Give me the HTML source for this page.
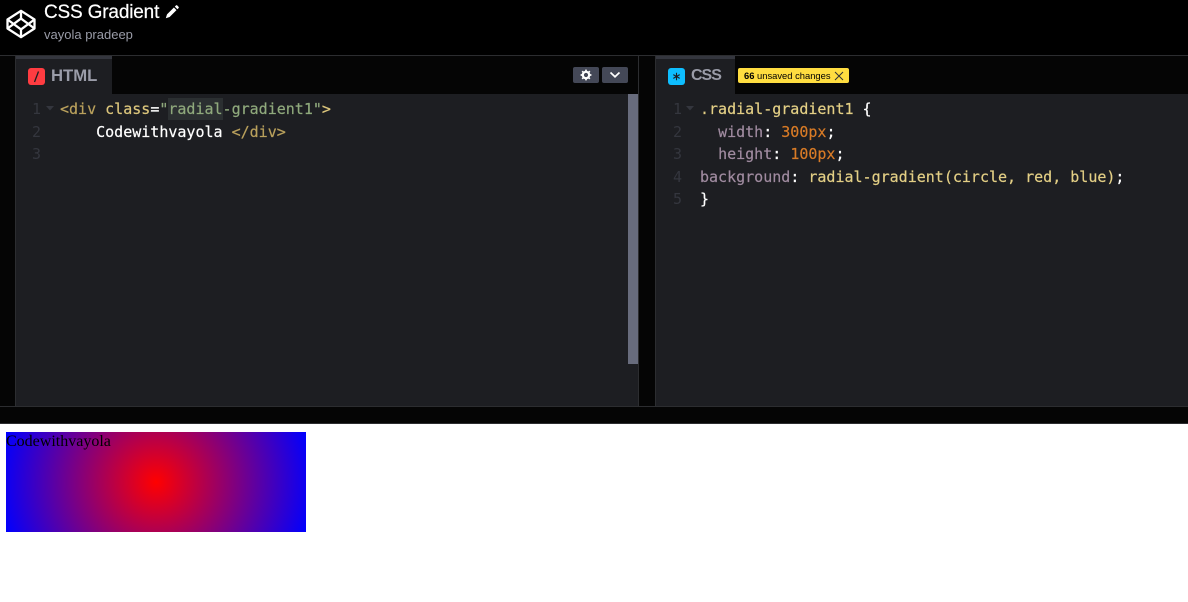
<!DOCTYPE html>
<html><head><meta charset="utf-8"><title>CSS Gradient</title>
<style>
html,body{margin:0;padding:0;width:1188px;height:602px;overflow:hidden;background:#fff}
div,span.a,svg{position:absolute}
.ui{font-family:"Liberation Sans",sans-serif}
.code{font-family:"DejaVu Sans Mono",monospace;font-size:15px;line-height:22px;white-space:pre;color:#fff;-webkit-text-stroke:.2px currentColor}
.n{color:#34363e;font-family:"DejaVu Sans Mono",monospace;font-size:15px;line-height:22px}
.t{color:#b9a05c}.k{color:#dcc67c}.s{color:#8fa97c}.tx{color:#fff}
.p{color:#a08ba0}.o{color:#d97b26}.f{color:#e3cf85}
</style></head><body>
<div style="left:0;top:0;width:1188px;height:424px;background:#050505"></div>
<div style="left:0;top:0;width:1188px;height:55px;background:#000"></div>
<div style="left:0;top:55px;width:1188px;height:1px;background:#2c2d30"></div>

<svg style="left:6px;top:9px" width="30" height="30" viewBox="0 0 30 30" fill="none" stroke="#fff" stroke-width="2.3" stroke-linejoin="round">
<path d="M15 1.8L28.5 10.5V19.5L15 28.2L1.5 19.5V10.5Z"/>
<path d="M15 1.8V9.6M15 20.4V28.2M1.5 10.5L15 20.4L28.5 10.5M1.5 19.5L15 9.6L28.5 19.5"/>
</svg>
<div class="ui" style="left:44px;top:1px;font-size:19px;line-height:24px;color:#fff;white-space:nowrap;letter-spacing:-.17px;-webkit-text-stroke:.2px #fff">CSS Gradient</div>
<svg style="left:165px;top:5px" width="14" height="14" viewBox="0 0 14 14" fill="#fff"><path d="M.8 13.2L2 9.4L8.9 2.5L11.5 5.1L4.6 12ZM9.8 1.6L10.9.5a1 1 0 0 1 1.4 0L13.5 1.7a1 1 0 0 1 0 1.4L12.4 4.2Z"/></svg>
<div class="ui" style="left:44px;top:26px;font-size:13px;line-height:17px;color:#9a9ca8;white-space:nowrap">vayola pradeep</div>

<!-- HTML panel -->
<div style="left:15px;top:56px;width:1px;height:350px;background:#2c2d30"></div>
<div style="left:16px;top:94px;width:622px;height:312px;background:#1d1e22"></div>
<div style="left:16px;top:56px;width:96px;height:38px;background:#1d1e22;border-top:3px solid #34363e;box-sizing:border-box"></div>
<div style="left:28px;top:68px;width:17px;height:17px;border-radius:3px;background:#ff3c41"></div>
<svg style="left:28px;top:68px" width="17" height="17"><path d="M6.5 14L10.5 3.5" stroke="#1d1e22" stroke-width="1.3"/></svg>
<div class="ui" style="left:51px;top:66px;font-size:16.7px;line-height:20px;font-weight:bold;color:#9a9ca8;white-space:nowrap">HTML</div>

<div style="left:573px;top:67px;width:26px;height:16px;border-radius:2px;background:#444857"></div>
<svg style="left:580px;top:69px" width="12" height="12" viewBox="0 0 12 12"><circle cx="6" cy="6" r="3.2" fill="none" stroke="#fff" stroke-width="2.2"/><path d="M6 .6V2.6M6 9.4V11.4M.6 6H2.6M9.4 6H11.4M2.2 2.2L3.6 3.6M8.4 8.4L9.8 9.8M9.8 2.2L8.4 3.6M3.6 8.4L2.2 9.8" stroke="#fff" stroke-width="1.7"/></svg>
<div style="left:602px;top:67px;width:26px;height:16px;border-radius:2px;background:#444857"></div>
<svg style="left:609px;top:71px" width="12" height="8" viewBox="0 0 12 8"><path d="M1.5 1.5L6 5.8L10.5 1.5" fill="none" stroke="#fff" stroke-width="1.7"/></svg>

<div style="left:628px;top:94px;width:10px;height:270px;background:#686c7d"></div>
<div style="left:638px;top:56px;width:1px;height:350px;background:#2c2d30"></div>

<div class="n" style="left:32px;top:98px">1</div>
<div class="n" style="left:32px;top:121px">2</div>
<div class="n" style="left:32px;top:143px">3</div>
<svg style="left:46px;top:106px" width="8" height="5"><path d="M0 0H8L4 4.5Z" fill="#34363e"/></svg>
<div style="left:168px;top:98px;width:55px;height:22px;background:#2b2f31"></div>
<div class="code" style="left:60px;top:98px"><span class="t">&lt;div</span> <span class="k">class</span><span class="tx">=</span><span class="s">"radial-gradient1"</span><span class="k">&gt;</span></div>
<div class="code" style="left:60px;top:121px">    Codewithvayola <span class="t">&lt;/div&gt;</span></div>

<!-- CSS panel -->
<div style="left:655px;top:56px;width:1px;height:350px;background:#2c2d30"></div>
<div style="left:656px;top:94px;width:532px;height:312px;background:#1d1e22"></div>
<div style="left:656px;top:56px;width:79px;height:38px;background:#1d1e22;border-top:3px solid #34363e;box-sizing:border-box"></div>
<div style="left:668px;top:68px;width:17px;height:17px;border-radius:3px;background:#0ebeff"></div>
<svg style="left:668px;top:68px" width="17" height="17"><path d="M8.5 4.8V12.2M5.3 6.6L11.7 10.4M11.7 6.6L5.3 10.4" stroke="#1d1e22" stroke-width="1.1"/></svg>
<div class="ui" style="left:691px;top:66px;font-size:16px;line-height:20px;font-weight:bold;color:#9a9ca8;white-space:nowrap;letter-spacing:-1px">CSS</div>
<div style="left:738px;top:68px;width:111px;height:15px;border-radius:2px;background:#ffdd40"></div>
<div class="ui" style="left:744px;top:68px;font-size:9.4px;line-height:15px;color:#000;white-space:nowrap"><b>66</b> unsaved changes</div>
<svg style="left:834px;top:71px" width="10" height="10"><path d="M1 1L9 9M9 1L1 9" stroke="#333" stroke-width="1"/></svg>

<div class="n" style="left:673px;top:98px">1</div>
<div class="n" style="left:673px;top:121px">2</div>
<div class="n" style="left:673px;top:143px">3</div>
<div class="n" style="left:673px;top:166px">4</div>
<div class="n" style="left:673px;top:188px">5</div>
<svg style="left:686px;top:106px" width="8" height="5"><path d="M0 0H8L4 4.5Z" fill="#34363e"/></svg>
<div class="code" style="left:700px;top:98px"><span class="f">.radial-gradient1</span> {</div>
<div class="code" style="left:700px;top:121px">  <span class="p">width</span>: <span class="o">300px</span>;</div>
<div class="code" style="left:700px;top:143px">  <span class="p">height</span>: <span class="o">100px</span>;</div>
<div class="code" style="left:700px;top:166px"><span class="p">background</span>: <span class="f">radial-gradient(circle, red, blue)</span>;</div>
<div class="code" style="left:700px;top:188px">}</div>

<div style="left:0;top:406px;width:1188px;height:1px;background:#2c2d30"></div>
<div style="left:0;top:423px;width:1188px;height:1px;background:#2c2d30"></div>

<!-- Result -->
<div style="left:6px;top:432px;width:300px;height:100px;background:radial-gradient(circle,red,blue);font-family:'Liberation Serif',serif;font-size:16px;line-height:19px;color:#000">Codewithvayola</div>
</body></html>
